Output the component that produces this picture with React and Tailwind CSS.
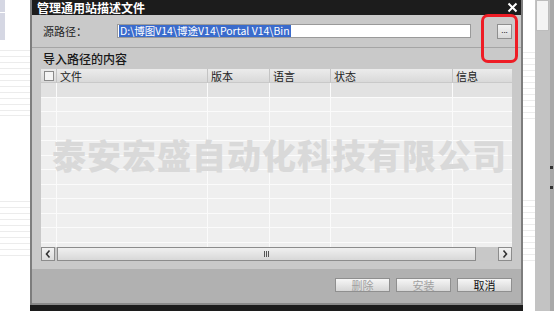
import React from "react";

const F = { fontFamily: '"Noto Sans CJK SC", "Noto Sans", sans-serif' };

function LeftBg() {
  const lines = [50, 56, 62, 68, 74, 80, 86, 92, 98, 104, 110, 115, 201, 207, 213, 219, 225, 231, 237, 243, 249, 255];
  return (
    <div className="relative w-[30px] h-full bg-white shrink-0">
      <div className="absolute left-0 top-0 w-[5px] h-[12px] bg-[#d5d7e3]" />
      <div className="absolute left-0 top-[13px] w-[5px] h-[27px] bg-[#d5d7e3]" />
      {lines.map((y) => (
        <div key={y} className="absolute left-0 w-[30px] h-px bg-[#ececec]" style={{ top: y }} />
      ))}
    </div>
  );
}

function RightBg() {
  const lines = [52, 58, 64, 70, 76, 82, 88, 94, 100, 106, 112, 118, 200, 206, 212, 218, 224, 230, 236, 242, 248, 254, 260];
  return (
    <div className="flex h-full flex-1">
      <div className="relative w-[12px] h-full bg-white">
        {lines.map((y) => (
          <div key={y} className="absolute left-0 w-[12px] h-px bg-[#ececec]" style={{ top: y }} />
        ))}
      </div>
      <div className="w-[15px] h-full bg-[#c3c3c3] flex flex-col">
        <div className="h-[31px] mx-[1px] bg-[#f4f4f4] border border-[#bdbdbd]" />
      </div>
      <div className="relative flex-1 h-full bg-[#a9a9a9]">
        <div className="absolute left-0 top-[166px] w-[3px] h-[3px] bg-[#333]" />
        <div className="absolute left-0 top-[186px] w-[3px] h-[3px] bg-[#333]" />
      </div>
    </div>
  );
}

function Chevron({ dir }) {
  return (
    <svg width="8" height="10" viewBox="0 0 8 10">
      {dir === "left" ? (
        <path d="M5.5 1.5 L2.5 5 L5.5 8.5" stroke="#333" strokeWidth="1.6" fill="none" />
      ) : (
        <path d="M2.5 1.5 L5.5 5 L2.5 8.5" stroke="#333" strokeWidth="1.6" fill="none" />
      )}
    </svg>
  );
}

const cols = [
  { w: "w-[151px]", t: "文件" },
  { w: "w-[62px]", t: "版本" },
  { w: "w-[61px]", t: "语言" },
  { w: "w-[122px]", t: "状态" },
  { w: "flex-1", t: "信息" },
];

function Table() {
  const rows = Array.from({ length: 12 });
  return (
    <div className="flex flex-col h-[192px] bg-[#c8c8c8] relative">
      <div className="flex h-[14px] shrink-0 bg-gradient-to-b from-[#ececec] to-[#d9d9d9] border-b border-[#c9c9c9] text-[11px] text-[#222]">
        <div className="w-[16px] flex items-center justify-center border-r border-[#c4c4c4]">
          <div className="w-[10px] h-[10px] border border-[#8a8a8a] bg-[#f4f4f4]" />
        </div>
        {cols.map((c, i) => (
          <div key={i} className={`${c.w} pl-[3px] flex items-center leading-[12px] ${i < 4 ? "border-r border-[#c4c4c4]" : ""}`}>
            {c.t}
          </div>
        ))}
      </div>
      <div className="flex-1 relative overflow-hidden bg-[#efefef]">
        {rows.map((_, i) => (
          <div
            key={i}
            className={`flex h-[14.5px] border-b border-[#fbfbfb] ${i === 0 ? "bg-[#e2e2e2]" : "bg-[#efefef]"}`}
          >
            <div className="w-[16px] border-r border-[#fbfbfb]" />
            <div className="w-[151px] border-r border-[#fbfbfb]" />
            <div className="w-[62px] border-r border-[#fbfbfb]" />
            <div className="w-[61px] border-r border-[#fbfbfb]" />
            <div className="w-[122px] border-r border-[#fbfbfb]" />
            <div className="flex-1" />
          </div>
        ))}
        <div
          className="absolute left-[11px] top-[55px] text-[34px] leading-[34px] font-black text-[#d9d9d9] tracking-[1px] whitespace-nowrap"
          style={F}
        >
          泰安宏盛自动化科技有限公司
        </div>
      </div>
      <div className="flex items-center h-[14px] shrink-0 bg-[#c8c8c8]">
        <div className="w-[14px] h-[14px] border border-[#8c8c8c] bg-gradient-to-b from-[#f2f2f2] to-[#dcdcdc] flex items-center justify-center">
          <Chevron dir="left" />
        </div>
        <div className="ml-[2px] w-[419px] h-[14px] border border-[#8c8c8c] bg-gradient-to-b from-[#f0f0f0] to-[#d8d8d8] relative">
          <div className="absolute left-[206px] top-[3px] flex gap-[1px]">
            <div className="w-px h-[6px] bg-[#555]" />
            <div className="w-px h-[6px] bg-[#555]" />
            <div className="w-px h-[6px] bg-[#555]" />
          </div>
        </div>
        <div className="flex-1" />
        <div className="w-[14px] h-[14px] border border-[#8c8c8c] bg-gradient-to-b from-[#f2f2f2] to-[#dcdcdc] flex items-center justify-center">
          <Chevron dir="right" />
        </div>
      </div>
    </div>
  );
}

function Btn({ children, disabled }) {
  return (
    <div
      className={`w-[55px] h-[14px] border border-[#8f8f8f] bg-gradient-to-b from-[#f6f6f6] to-[#d6d6d6] flex items-center justify-center text-[11px] leading-none ${disabled ? "text-[#a0a0a0]" : "text-[#111]"}`}
    >
      {children}
    </div>
  );
}

function Dialog() {
  return (
    <div className="relative w-[493px] h-full flex flex-col bg-[#1c1c1c] shrink-0" style={F}>
      <div className="h-[15px] shrink-0 flex items-center justify-between pl-[5px] pr-[3px] bg-[#1c1c1c] border-l-2 border-r-2 border-[#7d7d7d]">
        <span className="text-white text-[12px] leading-[15px] font-bold">管理通用站描述文件</span>
        <svg width="11" height="11" viewBox="0 0 11 11">
          <path d="M1.5 1.5 L9.5 9.5 M9.5 1.5 L1.5 9.5" stroke="#fff" strokeWidth="2" />
        </svg>
      </div>
      <div className="flex-1 flex flex-col border-l-2 border-r-2 border-[#7d7d7d] bg-[#c9c9c9]">
        <div className="h-[33px] shrink-0 flex items-center pl-[11px] pr-[9px] border-b border-[#a5a5a5]">
          <span className="text-[11px] text-[#222] w-[74px]">源路径：</span>
          <div className="w-[354px] h-[14px] bg-white border border-[#9a9a9a] flex items-center pl-[1px]">
            <span className="bg-[#3a6bcc] text-white text-[10.5px] leading-[12px] px-[1px] whitespace-nowrap">
              D:\博图V14\博途V14\Portal V14\Bin
            </span>
          </div>
          <div className="flex-1" />
          <div className="w-[15px] h-[15px] border border-[#8f8f8f] bg-gradient-to-b from-[#f4f4f4] to-[#d8d8d8] flex items-end justify-center pb-[4px]">
            <span className="text-[8px] leading-none text-[#222]">...</span>
          </div>
        </div>
        <div className="h-[21px] shrink-0 flex items-center pl-[11px] text-[12px] font-medium text-[#1a1a1a]">导入路径的内容</div>
        <div className="px-[9px] shrink-0">
          <Table />
        </div>
        <div className="h-[8px] shrink-0" />
        <div className="flex-1 bg-[#b1b1b1] flex items-start justify-end gap-[6px] pt-[9px] pr-[9px]">
          <Btn disabled>删除</Btn>
          <Btn disabled>安装</Btn>
          <Btn>取消</Btn>
        </div>
        <div className="h-[2px] shrink-0 bg-[#8a8a8a]" />
      </div>
      <div className="h-[6px] shrink-0 bg-[#1c1c1c]" />
      <div className="absolute left-[451px] top-[14px] w-[37px] h-[49px] border-[3px] border-[#ee1c25] rounded-[7px]" />
    </div>
  );
}

export default function App() {
  return (
    <div className="w-[554px] h-[311px] flex overflow-hidden bg-white">
      <LeftBg />
      <Dialog />
      <RightBg />
    </div>
  );
}
